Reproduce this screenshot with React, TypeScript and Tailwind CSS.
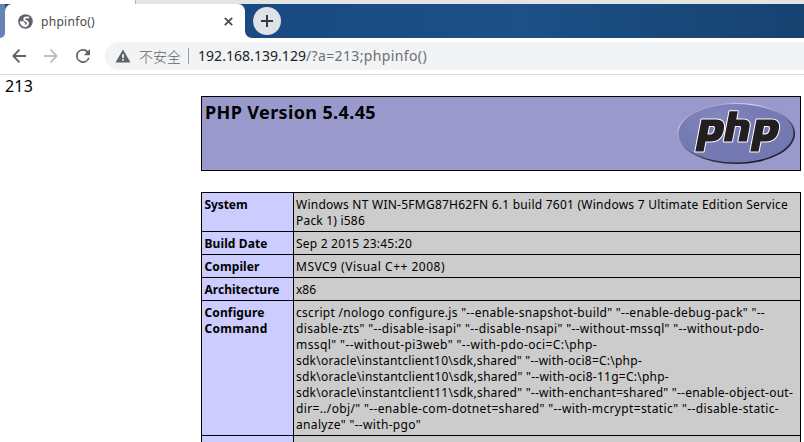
import { useLayoutEffect, useRef, useState } from "react";

type FitProps = { text: string; width: number; className?: string };

// A single line of text whose tracking is adjusted to fill the given width.
function Fit({ text, width, className = "" }: FitProps) {
  const ref = useRef<HTMLSpanElement>(null);
  const [spacing, setSpacing] = useState(0);
  useLayoutEffect(() => {
    const el = ref.current;
    if (!el) return;
    el.style.letterSpacing = "0px";
    setSpacing((width - el.getBoundingClientRect().width) / text.length);
  }, [text, width]);
  return (
    <span className={`block ${className}`}>
      <span ref={ref} className="inline-block whitespace-pre" style={{ letterSpacing: `${spacing}px` }}>
        {text}
      </span>
    </span>
  );
}

type Line = [string, number];
const rows: { label: Line[]; value: Line[]; height: string }[] = [
  {
    label: [["System", 43]],
    value: [
      ["Windows NT WIN-5FMG87H62FN 6.1 build 7601 (Windows 7 Ultimate Edition Service", 492],
      ["Pack 1) i586", 69],
    ],
    height: "h-[39px]",
  },
  { label: [["Build Date", 63]], value: [["Sep 2 2015 23:45:20", 116]], height: "h-[23px]" },
  { label: [["Compiler", 55]], value: [["MSVC9 (Visual C++ 2008)", 149]], height: "h-[23px]" },
  { label: [["Architecture", 75]], value: [["x86", 20]], height: "h-[23px]" },
  {
    label: [["Configure", 60], ["Command", 63]],
    value: [
      ['cscript /nologo configure.js "--enable-snapshot-build" "--enable-debug-pack" "--', 469],
      ['disable-zts" "--disable-isapi" "--disable-nsapi" "--without-mssql" "--without-pdo-', 468],
      ['mssql" "--without-pi3web" "--with-pdo-oci=C:\\php-', 301],
      ['sdk\\oracle\\instantclient10\\sdk,shared" "--with-oci8=C:\\php-', 346],
      ['sdk\\oracle\\instantclient10\\sdk,shared" "--with-oci8-11g=C:\\php-', 373],
      ['sdk\\oracle\\instantclient11\\sdk,shared" "--with-enchant=shared" "--enable-object-out-', 497],
      ['dir=../obj/" "--enable-com-dotnet=shared" "--with-mcrypt=static" "--disable-static-', 483],
      ['analyze" "--with-pgo"', 125],
    ],
    height: "h-[135px]",
  },
  { label: [], value: [], height: "h-[23px]" },
];

function PhpLogo() {
  return (
    <svg width="120" height="67" viewBox="0 0 120 67" className="shrink-0">
      <defs>
        <linearGradient id="rim" x1="0.2" y1="0" x2="0.8" y2="1">
          <stop offset="0" stopColor="#8d8fc2" />
          <stop offset="0.2" stopColor="#d9daed" />
          <stop offset="0.42" stopColor="#8587bb" />
          <stop offset="0.7" stopColor="#30304c" />
          <stop offset="1" stopColor="#16161d" />
        </linearGradient>
        <radialGradient id="disc" cx="0.34" cy="0.22" r="0.75">
          <stop offset="0" stopColor="#8587bf" />
          <stop offset="0.5" stopColor="#777bb3" />
          <stop offset="1" stopColor="#7378b0" />
        </radialGradient>
      </defs>
      <ellipse cx="59.300" cy="33.500" rx="58.800" ry="30.500" fill="url(#rim)" />
      <ellipse cx="58.900" cy="33.300" rx="57.500" ry="29.300" fill="url(#disc)" />
      <g fill="#231f20" fillRule="evenodd" stroke="#fff" strokeWidth="2" strokeLinejoin="round" paintOrder="stroke">
        <path d="M24.500 19.500H39C46 19.500 48 23.500 46.800 29.500C45.300 37.800 41 41.500 33.500 41.500H28.500L26.600 51.500H18.300ZM32 26L30.400 34.500H33C36.200 34.500 37.200 32.300 37.800 29.500C38.400 26.500 37.500 26 35 26Z" />
        <path d="M52.500 11.300H60.800L59.200 19.500H65C71.500 19.500 73.500 22 72.500 27.500L69.800 41.500H61.300L63.800 29C64.300 26.500 63.800 26 61.300 26H58L55 41.500H46.700Z" />
        <path d="M79.500 19.500H94C101 19.500 103 23.500 101.800 29.500C100.300 37.800 96 41.500 88.500 41.500H83.500L81.600 51.500H73.300ZM87 26L85.400 34.500H88C91.200 34.500 92.200 32.300 92.800 29.500C93.400 26.500 92.500 26 90 26Z" />
      </g>
    </svg>
  );
}

export default function App() {
  return (
    <div className="flex h-[442px] w-[804px] flex-col overflow-hidden bg-white font-['Noto_Sans','Noto_Sans_CJK_SC',sans-serif] text-black">
      <div className="flex h-1 shrink-0">
        <div className="w-[136px] border-r border-[#b4b4b4] bg-white" />
        <div className="flex-1 bg-[#e4e4e4]" />
      </div>

      <div className="flex h-[34px] shrink-0 bg-linear-to-r from-[#194a82] from-30% via-[#1c5087] via-65% to-[#164270]">
        <div className="w-[5px] bg-white">
          <div className="h-full w-[5px] rounded-br-[5px] bg-[#6684b3]" />
        </div>
        <div className="flex w-[240px] items-center rounded-t-[7px] bg-white pl-[13px]">
          <svg width="15" height="15" viewBox="0 0 20 20" fill="none" stroke="#fff">
            <circle cx="10" cy="10" r="9.700" fill="#5f6368" stroke="none" />
            <path d="M14.800 4.800C10.500 3.800 7.800 5.300 8.300 7.500C8.800 9.500 13.300 9 13.300 12C13.300 14.800 10.800 16 8.500 16.300" strokeWidth="2.600" />
            <path d="M2.300 9.800H7.500L9.800 12.500L8.500 17.300C5 16.700 2.300 13.500 2.300 9.800Z" fill="#fff" stroke="none" />
          </svg>
          <Fit text="phpinfo()" width={54} className="ml-2 mt-px w-[183px] text-[12px] leading-4 text-[#45494d]" />
          <svg width="9" height="9" viewBox="0 0 9 9" stroke="#45494d" strokeWidth="1.7">
            <path d="m.8.8 7.400 7.400M8.200.8.8 8.200" />
          </svg>
        </div>
        <div className="w-2 bg-white">
          <div className="h-full w-2 rounded-bl-[7px] bg-[#194a82]" />
        </div>
        <div className="mt-[3px] flex size-7 items-center justify-center rounded-full bg-[#dfe2e7]">
          <svg width="12" height="12" viewBox="0 0 12 12" stroke="#35393d" strokeWidth="2">
            <path d="M6 0v12M0 6h12" />
          </svg>
        </div>
      </div>

      <div className="flex h-[37px] shrink-0 items-start border-b border-[#d8dadd] pt-1">
        <div className="flex h-7 w-[105px] items-center pl-3">
          <svg width="14" height="14" viewBox="0 0 14 14" fill="none" stroke="#5f6368" strokeWidth="1.9">
            <path d="M14 7H1.500M7.500.7 1.300 7l6.200 6.300" />
          </svg>
          <svg width="14" height="14" viewBox="0 0 14 14" fill="none" stroke="#bdc0c3" strokeWidth="1.9" className="ml-[18px]">
            <path d="M0 7h12.500M6.500.7 12.700 7l-6.200 6.300" />
          </svg>
          <svg width="14" height="14" viewBox="4 4 16 16" fill="#5f6368" className="ml-[18px]">
            <path d="M17.650 6.350A8 8 0 1 0 19.730 14h-2.080A6 6 0 1 1 12 6c1.660 0 3.140.69 4.220 1.780L13 11h7V4z" />
          </svg>
        </div>
        <div className="flex h-7 flex-1 items-center rounded-l-full bg-[#f1f3f4] pl-[10px]">
          <svg width="16" height="14" viewBox="0 0 16 14">
            <path d="M8 .6 15.500 13.500H.5Z" fill="#5f6368" />
            <path d="M7.200 5h1.700v4H7.200Zm0 5h1.700v1.700H7.200Z" fill="#f1f3f4" />
          </svg>
          <Fit text="不安全" width={42} className="ml-2 w-[42px] font-['Noto_Sans_CJK_SC',sans-serif] text-[14px] font-light leading-5 text-[#5f6368]" />
          <div className="ml-[7px] h-4 w-px bg-[#9a9ea3]" />
          <Fit text="192.168.139.129" width={108} className="ml-[9px] w-[108px] text-[14px] leading-5 text-[#202124]" />
          <Fit text="/?a=213;phpinfo()" width={121} className="text-[14px] leading-5 text-[#6b6f74]" />
        </div>
      </div>

      <main className="flex flex-col">
        <Fit text="213" width={28} className="h-[21px] pl-[5px] text-[16px] leading-[23px]" />
        <header className="ml-[201px] flex h-[75px] w-[600px] justify-between border border-black bg-[#9999cc] pl-[3px] pr-[3px] pt-[3px]">
          <Fit text="PHP Version 5.4.45" width={171} className="text-[18px] font-bold leading-6" />
          <PhpLogo />
        </header>
        <section className="ml-[201px] mt-[21px] flex w-[600px] flex-col border-r border-t border-black text-[12px] leading-4">
          {rows.map((row, i) => (
            <div key={i} className={`flex shrink-0 border-b border-black ${row.height}`}>
              <div className="w-[93px] shrink-0 border-x border-black bg-[#ccccff] pl-[2.500px] pt-1 font-bold">
                {row.label.map(([text, width]) => (
                  <Fit key={text} text={text} width={width} />
                ))}
              </div>
              <div className="flex-1 bg-[#cccccc] pl-[2px] pt-1">
                {row.value.map(([text, width]) => (
                  <Fit key={text} text={text} width={width} />
                ))}
              </div>
            </div>
          ))}
        </section>
      </main>
    </div>
  );
}
